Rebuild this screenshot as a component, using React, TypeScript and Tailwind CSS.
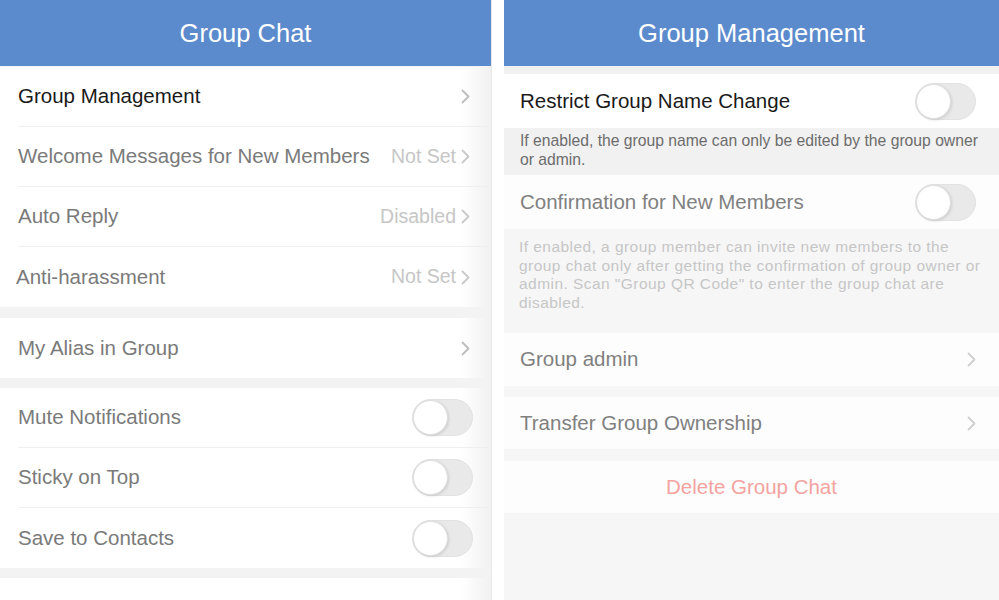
import React from 'react';

const font = { fontFamily: '"Liberation Sans", Arial, Helvetica, sans-serif' };

const Chevron = ({ className = '' }: { className?: string }) => (
  <svg width="9" height="15" viewBox="0 0 9 15" className={className} fill="none">
    <polyline points="1.5,1.5 7.5,7.5 1.5,13.5" stroke="currentColor" strokeWidth="1.8" strokeLinecap="round" strokeLinejoin="round" />
  </svg>
);

const Toggle = () => (
  <div className="relative w-[61px] h-[37px] rounded-full bg-[#e9e9e9] border border-[#e2e2e2]">
    <div className="absolute left-0 top-0 w-[35px] h-[35px] rounded-full bg-white border border-[#dedede] shadow-[1px_1px_3px_rgba(0,0,0,0.12)]" />
  </div>
);

interface RowProps {
  label: string;
  value?: string;
  chevron?: boolean;
  toggle?: boolean;
  dark?: boolean;
  divider?: boolean;
  labelClass?: string;
}

const LeftRow: React.FC<RowProps> = ({ label, value, chevron, toggle, dark, divider, labelClass = '' }) => (
  <div className="h-[60px] pl-[18px] flex flex-col">
    <div className="flex-1 flex items-center pr-[18px]">
      <span className={`flex-1 text-[20.5px] ${dark ? 'text-[#1a1a1a]' : 'text-[#7a7a7a]'} ${labelClass}`}>{label}</span>
      {value && <span className="text-[19.5px] text-[#c6c6c6] mr-[5px]">{value}</span>}
      {chevron && <Chevron className={`${value ? 'text-[#c9c9c9]' : 'text-[#bdbdbd]'} mr-[3px]`} />}
      {toggle && <Toggle />}
    </div>
    {divider && <div className="h-px bg-[#efefef]" />}
  </div>
);

const LeftPanel = () => (
  <div className="w-[492px] h-full flex flex-col bg-[#f3f3f3] border-r border-[#e9e9e9]">
    <div className="h-[66px] bg-[#5b8bcd] flex items-center justify-center shrink-0">
      <span className="text-white text-[25.5px] pt-[1px]">Group Chat</span>
    </div>
    <div className="bg-gradient-to-r from-white from-[94%] to-[#f1f1f1] mt-px">
      <LeftRow label="Group Management" chevron dark divider />
      <LeftRow label="Welcome Messages for New Members" value="Not Set" chevron divider />
      <LeftRow label="Auto Reply" value="Disabled" chevron divider />
      <LeftRow label="Anti-harassment" value="Not Set" chevron labelClass="-ml-[2px]" />
    </div>
    <div className="h-[11px]" />
    <div className="bg-gradient-to-r from-white from-[94%] to-[#f1f1f1]">
      <LeftRow label="My Alias in Group" chevron />
    </div>
    <div className="h-[10px]" />
    <div className="bg-gradient-to-r from-white from-[94%] to-[#f1f1f1]">
      <LeftRow label="Mute Notifications" toggle divider />
      <LeftRow label="Sticky on Top" toggle divider />
      <LeftRow label="Save to Contacts" toggle />
    </div>
    <div className="h-[10px]" />
    <div className="flex-1 bg-gradient-to-r from-white from-[94%] to-[#f1f1f1]" />
  </div>
);

const RightRow = ({ label, children, className = '', labelClass = '' }: { label: string; children?: React.ReactNode; className?: string; labelClass?: string }) => (
  <div className={`flex items-center pl-[16px] pr-[23px] ${className}`}>
    <span className={`flex-1 text-[20.5px] ${labelClass}`}>{label}</span>
    {children}
  </div>
);

const RightPanel = () => (
  <div className="w-[495px] h-full flex flex-col bg-[#f6f6f6]">
    <div className="h-[66px] bg-[#5b8bcd] flex items-center justify-center shrink-0">
      <span className="text-white text-[25.5px] pt-[1px]">Group Management</span>
    </div>
    <div className="h-[8px] bg-[#f1f1f1]" />
    <RightRow label="Restrict Group Name Change" className="h-[54px] bg-white" labelClass="text-[#1a1a1a]">
      <Toggle />
    </RightRow>
    <div className="h-[47px] bg-[#f1f1f1] pl-[16px] pr-[10px] pt-[3px] text-[15.7px] leading-[19px] text-[#6c6c6c]">
      If enabled, the group name can only be edited by the group owner or admin.
    </div>
    <RightRow label="Confirmation for New Members" className="h-[54px] bg-[#fdfdfd]" labelClass="text-[#808080]">
      <Toggle />
    </RightRow>
    <div className="h-[104px] bg-[#f6f6f6] pl-[15px] pr-[12px] pt-[9px] text-[15.5px] leading-[18.5px] text-[#c6c6c6] tracking-[0.45px]">
      If enabled, a group member can invite new members to the group chat only after getting the confirmation of group owner or admin. Scan "Group QR Code" to enter the group chat are disabled.
    </div>
    <RightRow label="Group admin" className="h-[53px] bg-[#fdfdfd]" labelClass="text-[#808080]">
      <Chevron className="text-[#cfcfcf]" />
    </RightRow>
    <div className="h-[11px]" />
    <RightRow label="Transfer Group Ownership" className="h-[52px] bg-[#fdfdfd]" labelClass="text-[#808080]">
      <Chevron className="text-[#cfcfcf]" />
    </RightRow>
    <div className="h-[12px]" />
    <div className="h-[52px] bg-[#fdfdfd] flex items-center justify-center">
      <span className="text-[20.5px] text-[#f3a3a0]">Delete Group Chat</span>
    </div>
    <div className="flex-1" />
  </div>
);

export default function App() {
  return (
    <div className="w-[999px] h-[600px] overflow-hidden bg-white flex" style={font}>
      <LeftPanel />
      <div className="w-[12px] shrink-0 bg-white" />
      <RightPanel />
    </div>
  );
}
